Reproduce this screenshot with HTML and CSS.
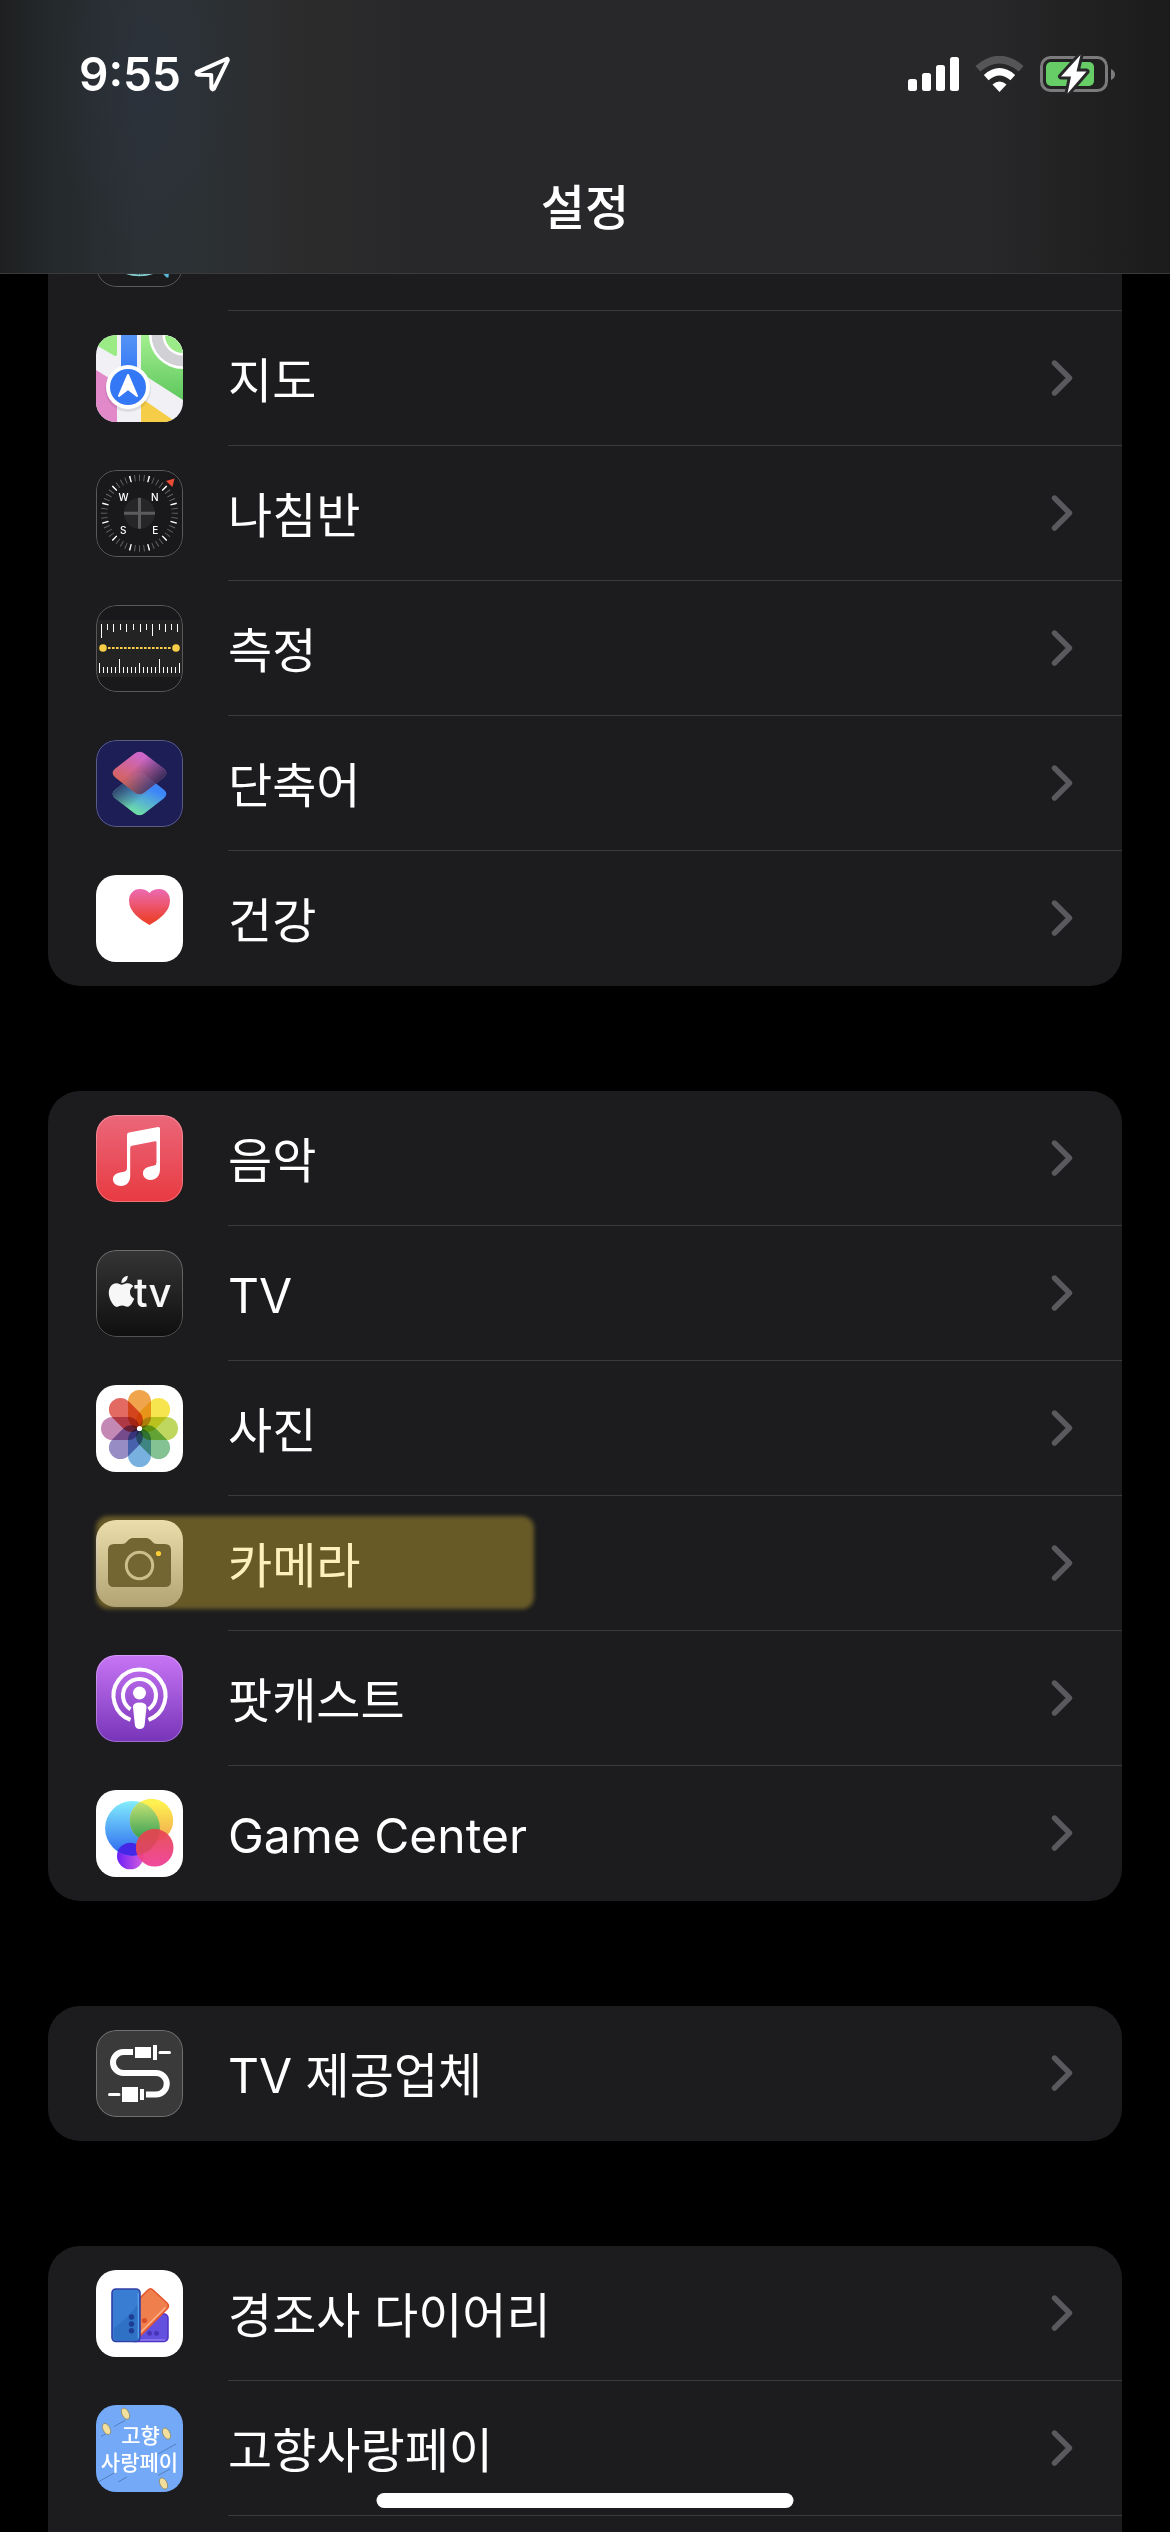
FILE: index.html
```html
<!DOCTYPE html>
<html lang="ko">
<head>
    <meta charset="UTF-8">
    <meta name="viewport" content="width=device-width, initial-scale=1.0">
    <title>설정</title>
    <link rel="stylesheet" href="styles.css">
</head>
<body>
    <svg class="defs" width="0" height="0" aria-hidden="true">
        <symbol id="chevron" viewBox="0 0 22 38">
            <path d="M3.5 4 L18.5 19 L3.5 34" fill="none" stroke="#5a5a5e" stroke-width="5.4" stroke-linecap="round" stroke-linejoin="round"/>
        </symbol>
    </svg>

    <div class="screen">
        <header class="header">
            <div class="status-bar">
                <div class="status-left">
                    <span class="time">9:55</span>
                    <svg class="location" viewBox="0 0 38 38" width="38" height="38" aria-hidden="true">
                        <path d="M33.5 4 L4 17.2 Q2.8 19.3 5 19.8 L18.2 20 L18.4 33 Q19.2 35.5 21 33.6 L34.8 5.2 Q34.9 3.5 33.5 4 Z" fill="none" stroke="#fff" stroke-width="4" stroke-linejoin="round"/>
                    </svg>
                </div>
                <div class="status-right">
                    <svg viewBox="0 0 51 36" width="51" height="36" aria-hidden="true">
                        <g fill="#fff">
                            <rect x="0" y="23" width="9" height="12" rx="2.5"/>
                            <rect x="14" y="17" width="9" height="18" rx="2.5"/>
                            <rect x="28" y="9" width="9" height="26" rx="2.5"/>
                            <rect x="42" y="1" width="9" height="34" rx="2.5"/>
                        </g>
                    </svg>
                    <svg viewBox="0 0 49 36" width="49" height="36" aria-hidden="true">
                        <path d="M2.8 12.8 Q24.5 -5.6 46.2 12.8" fill="none" stroke="#555557" stroke-width="7.4"/>
                        <path d="M11.2 21.6 Q24.5 10 37.8 21.6" fill="none" stroke="#fff" stroke-width="7.2"/>
                        <path d="M24.5 36 L17.5 28.6 Q24.5 22.4 31.5 28.6 Z" fill="#fff"/>
                    </svg>
                    <svg viewBox="0 0 76 40" width="76" height="40" aria-hidden="true">
                        <rect x="1.5" y="3.5" width="65" height="33" rx="9" fill="none" stroke="#7b7b7d" stroke-width="3"/>
                        <path d="M71 15 Q75 17 75 20.5 Q75 24 71 26 Z" fill="#7b7b7d"/>
                        <rect x="6" y="8" width="48" height="24" rx="5" fill="#67ce67"/>
                        <path d="M40.5 1 L21 22.5 L31 22.5 L27.5 39.5 L46.5 17.5 L36.5 17.5 Z" fill="#fff" stroke="#28282a" stroke-width="6" stroke-linejoin="round" paint-order="stroke"/>
                    </svg>
                </div>
            </div>
            <h1 class="title">설정</h1>
        </header>

        <main class="settings">
            <ul class="group group-top">
                <li>
                    <a class="row row-cut" href="#translate" aria-label="번역">
                        <svg class="icon" viewBox="0 0 87 87" aria-hidden="true">
                            <rect width="87" height="87" fill="#1c1c1e"/>
                            <circle cx="43.5" cy="37" r="38.5" fill="#27484d" stroke="#84cfd4" stroke-width="1.6"/>
                            <path d="M43.5 37 V75.5 M35 73 Q39 75.5 43.5 75.5 Q48 75.5 52 73" fill="none" stroke="#84cfd4"/>
                            <path d="M65.500 72 L73 72 L72.500 77.500 L70.500 77.500 Z" fill="#58b9d6"/>
                            <rect class="edge" x=".5" y=".5" width="86" height="86" rx="20"/>
                        </svg>
                        <span class="cell"></span>
                    </a>
                </li>
                <li>
                    <a class="row" href="#maps">
                        <svg class="icon" viewBox="0 0 87 87" aria-hidden="true">
                            <defs>
                                <linearGradient id="mapGreen" x1="0" y1="0" x2="0" y2="1">
                                    <stop offset="0" stop-color="#a3ef8f"/>
                                    <stop offset="1" stop-color="#5ec75e"/>
                                </linearGradient>
                                <linearGradient id="mapBlue" x1="0" y1="0" x2="0" y2="1">
                                    <stop offset="0" stop-color="#5594f5"/>
                                    <stop offset="1" stop-color="#3378f6"/>
                                </linearGradient>
                            </defs>
                            <rect width="87" height="87" fill="#f0f0f5"/>
                            <path d="M0 0 H21 V19 Q21 22 18 20.5 L0 10 Z" fill="#9aea86"/>
                            <path d="M0 35 L21 48 V87 H0 Z" fill="#e189c9"/>
                            <path d="M45 0 H87 V65 L45 38 Z" fill="url(#mapGreen)"/>
                            <path d="M45 63 L80 87 H45 Z" fill="#f6cd46"/>
                            <circle cx="87" cy="0" r="34" fill="#fff"/>
                            <circle cx="87" cy="0" r="31.5" fill="#d0d0d5"/>
                            <circle cx="87" cy="0" r="20.5" fill="#fff"/>
                            <circle cx="87" cy="0" r="18" fill="#9beb88"/>
                            <rect x="25" width="16" height="40" fill="url(#mapBlue)"/>
                            <circle cx="32" cy="54" r="23" fill="#000" opacity=".08"/>
                            <circle cx="32" cy="52" r="22" fill="#fff"/>
                            <circle cx="32" cy="52" r="18" fill="#3478f6"/>
                            <path d="M32 40 L41 61 L32 54 L23 61 Z" fill="#fff" stroke="#fff" stroke-width="2" stroke-linejoin="round"/>
                        </svg>
                        <span class="cell">
                            <span class="label">지도</span>
                            <svg class="chevron" aria-hidden="true"><use href="#chevron"/></svg>
                        </span>
                    </a>
                </li>
                <li>
                    <a class="row" href="#compass">
                        <svg class="icon" viewBox="0 0 87 87" aria-hidden="true">
                            <rect width="87" height="87" fill="#19191b"/>
                            <circle cx="43.5" cy="43.2" r="35.3" fill="none" stroke="#66666a" stroke-width="6.4" pathLength="480" stroke-dasharray="2 8" stroke-dashoffset="1"/>
                            <circle cx="43.5" cy="43.2" r="35.3" fill="none" stroke="#fff" stroke-width="6.4" pathLength="480" stroke-dasharray="3 37" stroke-dashoffset="-18.5"/>
                            <circle cx="43.5" cy="43.2" r="15.5" fill="#262628"/>
                            <path d="M28 43.2 H59 M43.5 27.7 V58.7" stroke="#5c5c5f" stroke-width="3"/>
                            <path d="M70 11 L78.6 8.4 L76.4 17 Z" fill="#ea4b35"/>
                            <g class="compass-letters">
                                <text x="27.5" y="30.5">W</text>
                                <text x="58.7" y="30.5">N</text>
                                <text x="27.2" y="63.5">S</text>
                                <text x="59.2" y="63.5">E</text>
                            </g>
                            <rect class="edge" x=".5" y=".5" width="86" height="86" rx="20"/>
                        </svg>
                        <span class="cell">
                            <span class="label">나침반</span>
                            <svg class="chevron" aria-hidden="true"><use href="#chevron"/></svg>
                        </span>
                    </a>
                </li>
                <li>
                    <a class="row" href="#measure">
                        <svg class="icon" viewBox="0 0 87 87" aria-hidden="true">
                            <rect width="87" height="87" fill="#19191b"/>
                            <rect x="1" y="15" width="85" height="57" fill="#232323"/>
                            <path d="M5.5 19 v14 M11.5 19 v6 M17.5 19 v8 M24.5 19 v6 M30.5 19 v8 M37.5 19 v6 M44.5 19 v8 M50.5 19 v6 M56.5 19 v12 M63.5 19 v6 M69.5 19 v8 M75.5 19 v6 M81.5 19 v8" stroke="#fff"/>
                            <path d="M3.5 68 v-10 M7.5 68 v-6 M11.5 68 v-6 M15.5 68 v-6 M19.5 68 v-6 M23.5 68 v-14 M27.5 68 v-6 M31.5 68 v-6 M35.5 68 v-6 M39.5 68 v-6 M43.5 68 v-10 M47.5 68 v-6 M51.5 68 v-6 M55.5 68 v-6 M59.5 68 v-6 M63.5 68 v-14 M67.5 68 v-6 M71.5 68 v-6 M75.5 68 v-6 M79.5 68 v-6 M83.5 68 v-10" stroke="#fff"/>
                            <path d="M12 43 H76" stroke="#f7ce46" stroke-width="2" stroke-dasharray="2.6 1.4"/>
                            <circle cx="7" cy="43" r="3.8" fill="#f7ce46"/>
                            <circle cx="80" cy="43" r="3.8" fill="#f7ce46"/>
                            <rect class="edge" x=".5" y=".5" width="86" height="86" rx="20"/>
                        </svg>
                        <span class="cell">
                            <span class="label">측정</span>
                            <svg class="chevron" aria-hidden="true"><use href="#chevron"/></svg>
                        </span>
                    </a>
                </li>
                <li>
                    <a class="row" href="#shortcuts">
                        <svg class="icon" viewBox="0 0 87 87" aria-hidden="true">
                            <defs>
                                <linearGradient id="scTop" x1=".1" y1=".75" x2=".5" y2=".1">
                                    <stop offset="0" stop-color="#f46e50"/>
                                    <stop offset="1" stop-color="#ea74da"/>
                                </linearGradient>
                                <linearGradient id="scTopShade" x1=".5" y1=".25" x2=".95" y2=".6">
                                    <stop offset="0" stop-color="#40305f" stop-opacity="0"/>
                                    <stop offset="1" stop-color="#40305f"/>
                                </linearGradient>
                                <linearGradient id="scBottom" x1=".4" y1="1" x2=".75" y2=".4">
                                    <stop offset="0" stop-color="#74e69f"/>
                                    <stop offset="1" stop-color="#3d86fa"/>
                                </linearGradient>
                                <linearGradient id="scBottomShade" x1=".05" y1=".35" x2=".45" y2=".7">
                                    <stop offset="0" stop-color="#2f4068"/>
                                    <stop offset="1" stop-color="#2f4068" stop-opacity="0"/>
                                </linearGradient>
                                <path id="scTile" d="M38 14 Q43.5 9.6 49 14 L68 28.8 Q72.8 33 68 37.2 L49 52 Q43.5 56.4 38 52 L19 37.2 Q14.2 33 19 28.8 Z"/>
                            </defs>
                            <rect width="87" height="87" fill="#1c1e55"/>
                            <g transform="translate(0 21)">
                                <use href="#scTile" fill="url(#scBottom)"/>
                                <use href="#scTile" fill="url(#scBottomShade)"/>
                            </g>
                            <g opacity=".86">
                                <use href="#scTile" fill="url(#scTop)"/>
                                <use href="#scTile" fill="url(#scTopShade)"/>
                            </g>
                            <rect class="edge" x=".5" y=".5" width="86" height="86" rx="20"/>
                        </svg>
                        <span class="cell">
                            <span class="label">단축어</span>
                            <svg class="chevron" aria-hidden="true"><use href="#chevron"/></svg>
                        </span>
                    </a>
                </li>
                <li>
                    <a class="row" href="#health">
                        <svg class="icon" viewBox="0 0 87 87" aria-hidden="true">
                            <defs>
                                <linearGradient id="heart" x1="0" y1="0" x2="0" y2="1">
                                    <stop offset="0" stop-color="#ec6bb4"/>
                                    <stop offset=".85" stop-color="#ec4231"/>
                                </linearGradient>
                            </defs>
                            <rect width="87" height="87" fill="#fff"/>
                            <path d="M53.5 50 C44 44.5 33 37 33 25.5 C33 18.5 38 14 43.5 14 C48 14 51.5 15.5 53.5 18 C55.5 15.5 59 14 63.5 14 C69 14 74 18.5 74 25.5 C74 37 63 44.5 53.5 50 Z" fill="url(#heart)"/>
                        </svg>
                        <span class="cell">
                            <span class="label">건강</span>
                            <svg class="chevron" aria-hidden="true"><use href="#chevron"/></svg>
                        </span>
                    </a>
                </li>
            </ul>

            <ul class="group">
                <li>
                    <a class="row" href="#music">
                        <svg class="icon" viewBox="0 0 87 87" aria-hidden="true">
                            <defs>
                                <linearGradient id="music" x1="0" y1="0" x2="0" y2="1">
                                    <stop offset="0" stop-color="#eb677a"/>
                                    <stop offset="1" stop-color="#e83a41"/>
                                </linearGradient>
                            </defs>
                            <rect width="87" height="87" fill="url(#music)"/>
                            <path d="M31 20 Q31 18 33 17.6 L62 12 Q64 11.7 64 13.5 V54 C64 61 60 65 54.5 65 C50 65 47 62 47 58.5 C47 54.5 49.5 52.5 54 51.5 L58 50.6 Q60.5 50 60.5 47.5 V27.5 Q60.5 26 59 26.3 L36 30.8 Q34.2 31.2 34.2 33 V61 C34.2 67 30.5 71 25 71 C20 71 17 68 17 64.5 C17 60.5 19.5 58.5 24 57.5 L28 56.7 Q31 56 31 53 Z" fill="#fff"/>
                            <rect class="edge" x=".5" y=".5" width="86" height="86" rx="20"/>
                        </svg>
                        <span class="cell">
                            <span class="label">음악</span>
                            <svg class="chevron" aria-hidden="true"><use href="#chevron"/></svg>
                        </span>
                    </a>
                </li>
                <li>
                    <a class="row" href="#tv">
                        <svg class="icon" viewBox="0 0 87 87" aria-hidden="true">
                            <defs>
                                <linearGradient id="tv" x1="0" y1="0" x2="0" y2="1">
                                    <stop offset="0" stop-color="#353535"/>
                                    <stop offset="1" stop-color="#0f0f0f"/>
                                </linearGradient>
                            </defs>
                            <rect width="87" height="87" fill="url(#tv)"/>
                            <path transform="translate(9.9 25.7) scale(1.3)" fill="#f7f7f7" d="M12.152 6.896c-.948 0-2.415-1.078-3.96-1.04-2.04.027-3.91 1.183-4.961 3.014-2.117 3.675-.546 9.103 1.519 12.09 1.013 1.454 2.208 3.09 3.792 3.039 1.52-.065 2.09-.987 3.935-.987 1.831 0 2.35.987 3.96.948 1.637-.026 2.676-1.48 3.676-2.948 1.156-1.688 1.636-3.325 1.662-3.415-.039-.013-3.182-1.221-3.22-4.857-.026-3.04 2.48-4.494 2.597-4.559-1.429-2.09-3.623-2.324-4.39-2.376-2-.156-3.675 1.09-4.61 1.09zM15.53 3.83c.843-1.012 1.4-2.427 1.245-3.83-1.207.052-2.662.805-3.532 1.818-.78.896-1.454 2.338-1.273 3.714 1.338.104 2.715-.688 3.559-1.701"/>
                            <text class="tv-text" x="38" y="57">tv</text>
                            <rect class="edge" x=".5" y=".5" width="86" height="86" rx="20"/>
                        </svg>
                        <span class="cell">
                            <span class="label">TV</span>
                            <svg class="chevron" aria-hidden="true"><use href="#chevron"/></svg>
                        </span>
                    </a>
                </li>
                <li>
                    <a class="row" href="#photos">
                        <svg class="icon" viewBox="0 0 87 87" aria-hidden="true">
                            <defs>
                                <rect id="petal" x="32" y="5" width="23" height="38.5" rx="11.5"/>
                            </defs>
                            <rect width="87" height="87" fill="#fff"/>
                            <g class="petals">
                                <use href="#petal" fill="#f0a54d"/>
                                <use href="#petal" fill="#f6e54e" transform="rotate(45 43.5 43.5)"/>
                                <use href="#petal" fill="#bfd75e" transform="rotate(90 43.5 43.5)"/>
                                <use href="#petal" fill="#84c193" transform="rotate(135 43.5 43.5)"/>
                                <use href="#petal" fill="#78b0df" transform="rotate(180 43.5 43.5)"/>
                                <use href="#petal" fill="#988cc5" transform="rotate(225 43.5 43.5)"/>
                                <use href="#petal" fill="#c488b4" transform="rotate(270 43.5 43.5)"/>
                                <use href="#petal" fill="#e26a62" transform="rotate(315 43.5 43.5)"/>
                            </g>
                            <circle cx="43.5" cy="43.5" r="2.6" fill="#fff"/>
                        </svg>
                        <span class="cell">
                            <span class="label">사진</span>
                            <svg class="chevron" aria-hidden="true"><use href="#chevron"/></svg>
                        </span>
                    </a>
                </li>
                <li>
                    <a class="row row-marked" href="#camera">
                        <svg class="icon" viewBox="0 0 87 87" aria-hidden="true">
                            <defs>
                                <linearGradient id="camera" x1="0" y1="0" x2="0" y2="1">
                                    <stop offset="0" stop-color="#e4e4e6"/>
                                    <stop offset="1" stop-color="#8c8c90"/>
                                </linearGradient>
                            </defs>
                            <rect width="87" height="87" fill="url(#camera)"/>
                            <path d="M18 24 H26 Q29 24 31 21.5 Q33.5 18 37 18 H50 Q53.5 18 56 21.5 Q58 24 61 24 H69 Q75 24 75 30 V61 Q75 67 69 67 H18 Q12 67 12 61 V30 Q12 24 18 24 Z" fill="#2e2e30"/>
                            <circle cx="43.5" cy="45.5" r="13.2" fill="none" stroke="#b4b4b6" stroke-width="3"/>
                            <circle cx="62.5" cy="33.5" r="2.6" fill="#fdcb30"/>
                        </svg>
                        <span class="cell">
                            <span class="label">카메라</span>
                            <svg class="chevron" aria-hidden="true"><use href="#chevron"/></svg>
                        </span>
                    </a>
                </li>
                <li>
                    <a class="row" href="#podcasts">
                        <svg class="icon" viewBox="0 0 87 87" aria-hidden="true">
                            <defs>
                                <linearGradient id="podcast" x1="0" y1="0" x2="0" y2="1">
                                    <stop offset="0" stop-color="#c775f5"/>
                                    <stop offset="1" stop-color="#7734b8"/>
                                </linearGradient>
                            </defs>
                            <rect width="87" height="87" fill="url(#podcast)"/>
                            <g fill="none" stroke="#fff" stroke-width="4">
                                <path d="M34.5 64.9 A26 26 0 1 1 52.5 64.9"/>
                                <path d="M34.5 54.3 A16.5 16.5 0 1 1 52.5 54.3"/>
                            </g>
                            <circle cx="43.5" cy="38" r="6.5" fill="#fff"/>
                            <path d="M37 52 Q37 47.5 43.5 47.5 Q50.5 47.5 50.5 52 L48.6 70 Q48 74 43.7 74 Q39.5 74 38.9 70 Z" fill="#fff"/>
                            <rect class="edge" x=".5" y=".5" width="86" height="86" rx="20"/>
                        </svg>
                        <span class="cell">
                            <span class="label">팟캐스트</span>
                            <svg class="chevron" aria-hidden="true"><use href="#chevron"/></svg>
                        </span>
                    </a>
                </li>
                <li>
                    <a class="row" href="#game-center">
                        <svg class="icon" viewBox="0 0 87 87" aria-hidden="true">
                            <defs>
                                <linearGradient id="gcBlue" x1="0" y1="0" x2="0" y2="1">
                                    <stop offset="0" stop-color="#83edfc"/>
                                    <stop offset="1" stop-color="#2a66f0"/>
                                </linearGradient>
                                <linearGradient id="gcYellow" x1="0" y1="0" x2="0" y2="1">
                                    <stop offset=".1" stop-color="#fdf150"/>
                                    <stop offset="1" stop-color="#f1a24f"/>
                                </linearGradient>
                                <linearGradient id="gcGreen" x1="0" y1="0" x2="0" y2="1">
                                    <stop offset="0" stop-color="#d0e878"/>
                                    <stop offset=".9" stop-color="#3ca154"/>
                                </linearGradient>
                                <linearGradient id="gcRed" x1="0" y1="0" x2="0" y2="1">
                                    <stop offset="0" stop-color="#e8484c"/>
                                    <stop offset="1" stop-color="#ee3d98"/>
                                </linearGradient>
                                <linearGradient id="gcPurple" x1="0" y1="0" x2="1" y2="0">
                                    <stop offset="0" stop-color="#6d20f8"/>
                                    <stop offset="1" stop-color="#d65cdc"/>
                                </linearGradient>
                                <clipPath id="gcClip"><circle cx="36.5" cy="38.3" r="27.4"/></clipPath>
                            </defs>
                            <rect width="87" height="87" fill="#fff"/>
                            <circle cx="34.3" cy="66" r="13.3" fill="url(#gcPurple)"/>
                            <circle cx="36.5" cy="38.3" r="27.4" fill="url(#gcBlue)"/>
                            <circle cx="55.5" cy="30.5" r="21.7" fill="url(#gcYellow)"/>
                            <g clip-path="url(#gcClip)">
                                <circle cx="55.5" cy="30.5" r="21.7" fill="url(#gcGreen)"/>
                                <circle cx="34.3" cy="66" r="13.3" fill="#4326e6"/>
                            </g>
                            <circle cx="58.7" cy="57.8" r="18.8" fill="url(#gcRed)" opacity=".94"/>
                            <circle cx="58.7" cy="57.8" r="18.8" fill="#d8494f" opacity=".6" clip-path="url(#gcClip)"/>
                        </svg>
                        <span class="cell">
                            <span class="label">Game Center</span>
                            <svg class="chevron" aria-hidden="true"><use href="#chevron"/></svg>
                        </span>
                    </a>
                </li>
            </ul>

            <ul class="group">
                <li>
                    <a class="row" href="#tv-provider">
                        <svg class="icon" viewBox="0 0 87 87" aria-hidden="true">
                            <rect width="87" height="87" fill="#3a3a3a"/>
                            <path d="M37 22 H27.5 a10.5 10.5 0 0 0 0 21 H60 a10.7 10.7 0 0 1 0 21.5 H50" fill="none" stroke="#fff" stroke-width="6"/>
                            <path d="M39 17 h16 v11 h-16 Z M57 15 h4 v15 h-4 Z M26 57 h16 v15 h-16 Z M44 59 h4 v11 h-4 Z" fill="#fff"/>
                            <path d="M64 22.4 H73.5 M13.5 64.5 H23" stroke="#fff" stroke-width="3" stroke-linecap="round"/>
                            <rect class="edge" x=".5" y=".5" width="86" height="86" rx="20"/>
                        </svg>
                        <span class="cell">
                            <span class="label">TV 제공업체</span>
                            <svg class="chevron" aria-hidden="true"><use href="#chevron"/></svg>
                        </span>
                    </a>
                </li>
            </ul>

            <ul class="group group-bottom">
                <li>
                    <a class="row" href="#diary">
                        <svg class="icon" viewBox="0 0 87 87" aria-hidden="true">
                            <rect width="87" height="87" fill="#fff"/>
                            <rect x="34" y="44" width="38" height="27.5" rx="4" fill="#6350df" stroke="#4f2fc4" stroke-width="1.5"/>
                            <path d="M38 70 H69" stroke="#8a7cf0" stroke-width="1.5"/>
                            <circle cx="53.5" cy="63.2" r="2.5" fill="#4a35b8"/>
                            <circle cx="60.5" cy="63.2" r="2.5" fill="#4a35b8"/>
                            <path d="M40 32 L52 20 Q54.5 17.5 57 20 L71 33 Q74 36 71 39 L44 66 Z" fill="#f07f4e" stroke="#e4562c" stroke-width="1.6"/>
                            <path d="M44 63 L69.5 37.5" stroke="#fbb48c" stroke-width="1.5"/>
                            <circle cx="48.5" cy="50.5" r="2.6" fill="#d94f2b"/>
                            <rect x="16" y="19" width="28" height="52.5" rx="4" fill="#397dd2" stroke="#2f3fa6" stroke-width="1.6"/>
                            <path d="M18 58 Q32 48 42 34 V67 Q42 70 39 70 H21 Q18 70 18 67 Z" fill="#2f71c4"/>
                            <path d="M42.3 23 V68" stroke="#59a5ea" stroke-width="1.2"/>
                            <g fill="#1d3d94">
                                <circle cx="35.5" cy="47" r="2.7"/>
                                <circle cx="35.5" cy="54" r="2.7"/>
                                <circle cx="35.5" cy="60.7" r="2.7"/>
                            </g>
                        </svg>
                        <span class="cell">
                            <span class="label">경조사 다이어리</span>
                            <svg class="chevron" aria-hidden="true"><use href="#chevron"/></svg>
                        </span>
                    </a>
                </li>
                <li>
                    <a class="row" href="#gohyang-pay">
                        <svg class="icon" viewBox="0 0 87 87" aria-hidden="true">
                            <rect width="87" height="87" fill="#73a9f7"/>
                            <path d="M18 21.5 L29 15.5 M5 31.5 L13 27 M62 49 L80 39 M62 70.5 L74 64 M3 76.5 L18 68 M22 77 L31 72" stroke="#5480bf"/>
                            <g fill="#f3df9d" stroke="#8f8a6a" stroke-width=".8">
                                <ellipse cx="29.5" cy="8.7" rx="3.5" ry="6" transform="rotate(-27 29.5 8.7)"/>
                                <ellipse cx="10.5" cy="24" rx="3.5" ry="6" transform="rotate(-27 10.5 24)"/>
                                <ellipse cx="70.5" cy="28.6" rx="3.5" ry="6" transform="rotate(-27 70.5 28.6)"/>
                                <ellipse cx="67.5" cy="78.5" rx="3.5" ry="6" transform="rotate(-27 67.5 78.5)"/>
                            </g>
                            <g class="pay-text">
                                <text x="44.5" y="37.5">고향</text>
                                <text x="43.5" y="64.5">사랑페이</text>
                            </g>
                        </svg>
                        <span class="cell">
                            <span class="label">고향사랑페이</span>
                            <svg class="chevron" aria-hidden="true"><use href="#chevron"/></svg>
                        </span>
                    </a>
                </li>
            </ul>
        </main>

        <div class="home-indicator"></div>
    </div>
</body>
</html>
```
FILE: styles.css
```css
* {
    margin: 0;
    padding: 0;
    box-sizing: border-box;
}

body {
    background: #000;
    color: #fff;
    font-family: Inter, 'Noto Sans CJK KR', sans-serif;
}

.defs {
    position: absolute;
}

.screen {
    display: flex;
    flex-direction: column;
    min-height: 100vh;
}

/* header */
.header {
    height: 274px;
    border-bottom: 1px solid #3a3a3c;
    background:
        radial-gradient(90px 150px at 145px 90px, rgba(44, 50, 62, 0.7), rgba(44, 50, 62, 0)),
        linear-gradient(90deg, #1e1f20 0, #24292b 50px, #2b3135 140px, #2c3134 200px, #2c2c2d 290px, #28282a 420px, #28282a 84%, #1b1b1b 100%);
}

.status-bar {
    display: flex;
    justify-content: space-between;
    align-items: center;
    height: 148px;
    padding: 0 54px 0 79px;
}

.status-left {
    display: flex;
    align-items: center;
    gap: 12px;
}

.status-right {
    display: flex;
    align-items: center;
    gap: 16px;
}

.time {
    font-size: 46px;
    line-height: 56px;
    font-weight: 600;
}

.title {
    font-size: 48px;
    line-height: 120px;
    font-weight: 500;
    text-align: center;
}

/* lists */
.settings {
    flex: 1;
    display: flex;
    flex-direction: column;
    gap: 105px;
    padding: 0 48px;
}

.group {
    list-style: none;
    background: #1c1c1e;
    border-radius: 32px;
    overflow: hidden;
}

.group-top {
    border-top-left-radius: 0;
    border-top-right-radius: 0;
}

.group-bottom {
    flex: 1;
    border-bottom-left-radius: 0;
    border-bottom-right-radius: 0;
}

.row {
    position: relative;
    display: flex;
    align-items: center;
    gap: 45px;
    height: 135px;
    padding-left: 48px;
    color: inherit;
    text-decoration: none;
}

/* first row is scrolled half under the header */
.row-cut {
    height: 37px;
    align-items: flex-end;
    overflow: hidden;
}

.row-cut .icon {
    margin-bottom: 24px;
}

.icon {
    flex: none;
    width: 87px;
    height: 87px;
    border-radius: 20px;
}

.cell {
    flex: 1;
    align-self: stretch;
    display: flex;
    justify-content: space-between;
    align-items: center;
    padding-right: 49px;
    border-bottom: 1px solid #3a3a3c;
}

.group:not(.group-bottom) li:last-child .cell {
    border-bottom-color: transparent;
}

.label {
    padding-top: 5px;
    font-size: 48px;
    line-height: 72px;
}

.chevron {
    width: 22px;
    height: 38px;
}

/* highlighter stroke over the camera row */
.row-marked::after {
    content: '';
    position: absolute;
    left: 48px;
    top: 20px;
    width: 438px;
    height: 93px;
    border-radius: 12px;
    background: rgba(252, 211, 60, 0.34);
    filter: blur(2px);
    pointer-events: none;
}

/* icon details */
.edge {
    fill: none;
    stroke: rgba(255, 255, 255, 0.28);
}

.petals {
    isolation: isolate;
}

.petals use {
    mix-blend-mode: multiply;
}

.compass-letters {
    fill: #fff;
    font-size: 10px;
    font-weight: 500;
    text-anchor: middle;
}

.tv-text {
    fill: #f7f7f7;
    font-size: 40px;
    font-weight: 500;
}

.pay-text {
    fill: #fff;
    font-size: 21px;
    font-weight: 500;
    text-anchor: middle;
}

.home-indicator {
    position: fixed;
    left: 50%;
    bottom: 24px;
    width: 417px;
    height: 15px;
    border-radius: 8px;
    background: #fff;
    transform: translateX(-50%);
}
```
